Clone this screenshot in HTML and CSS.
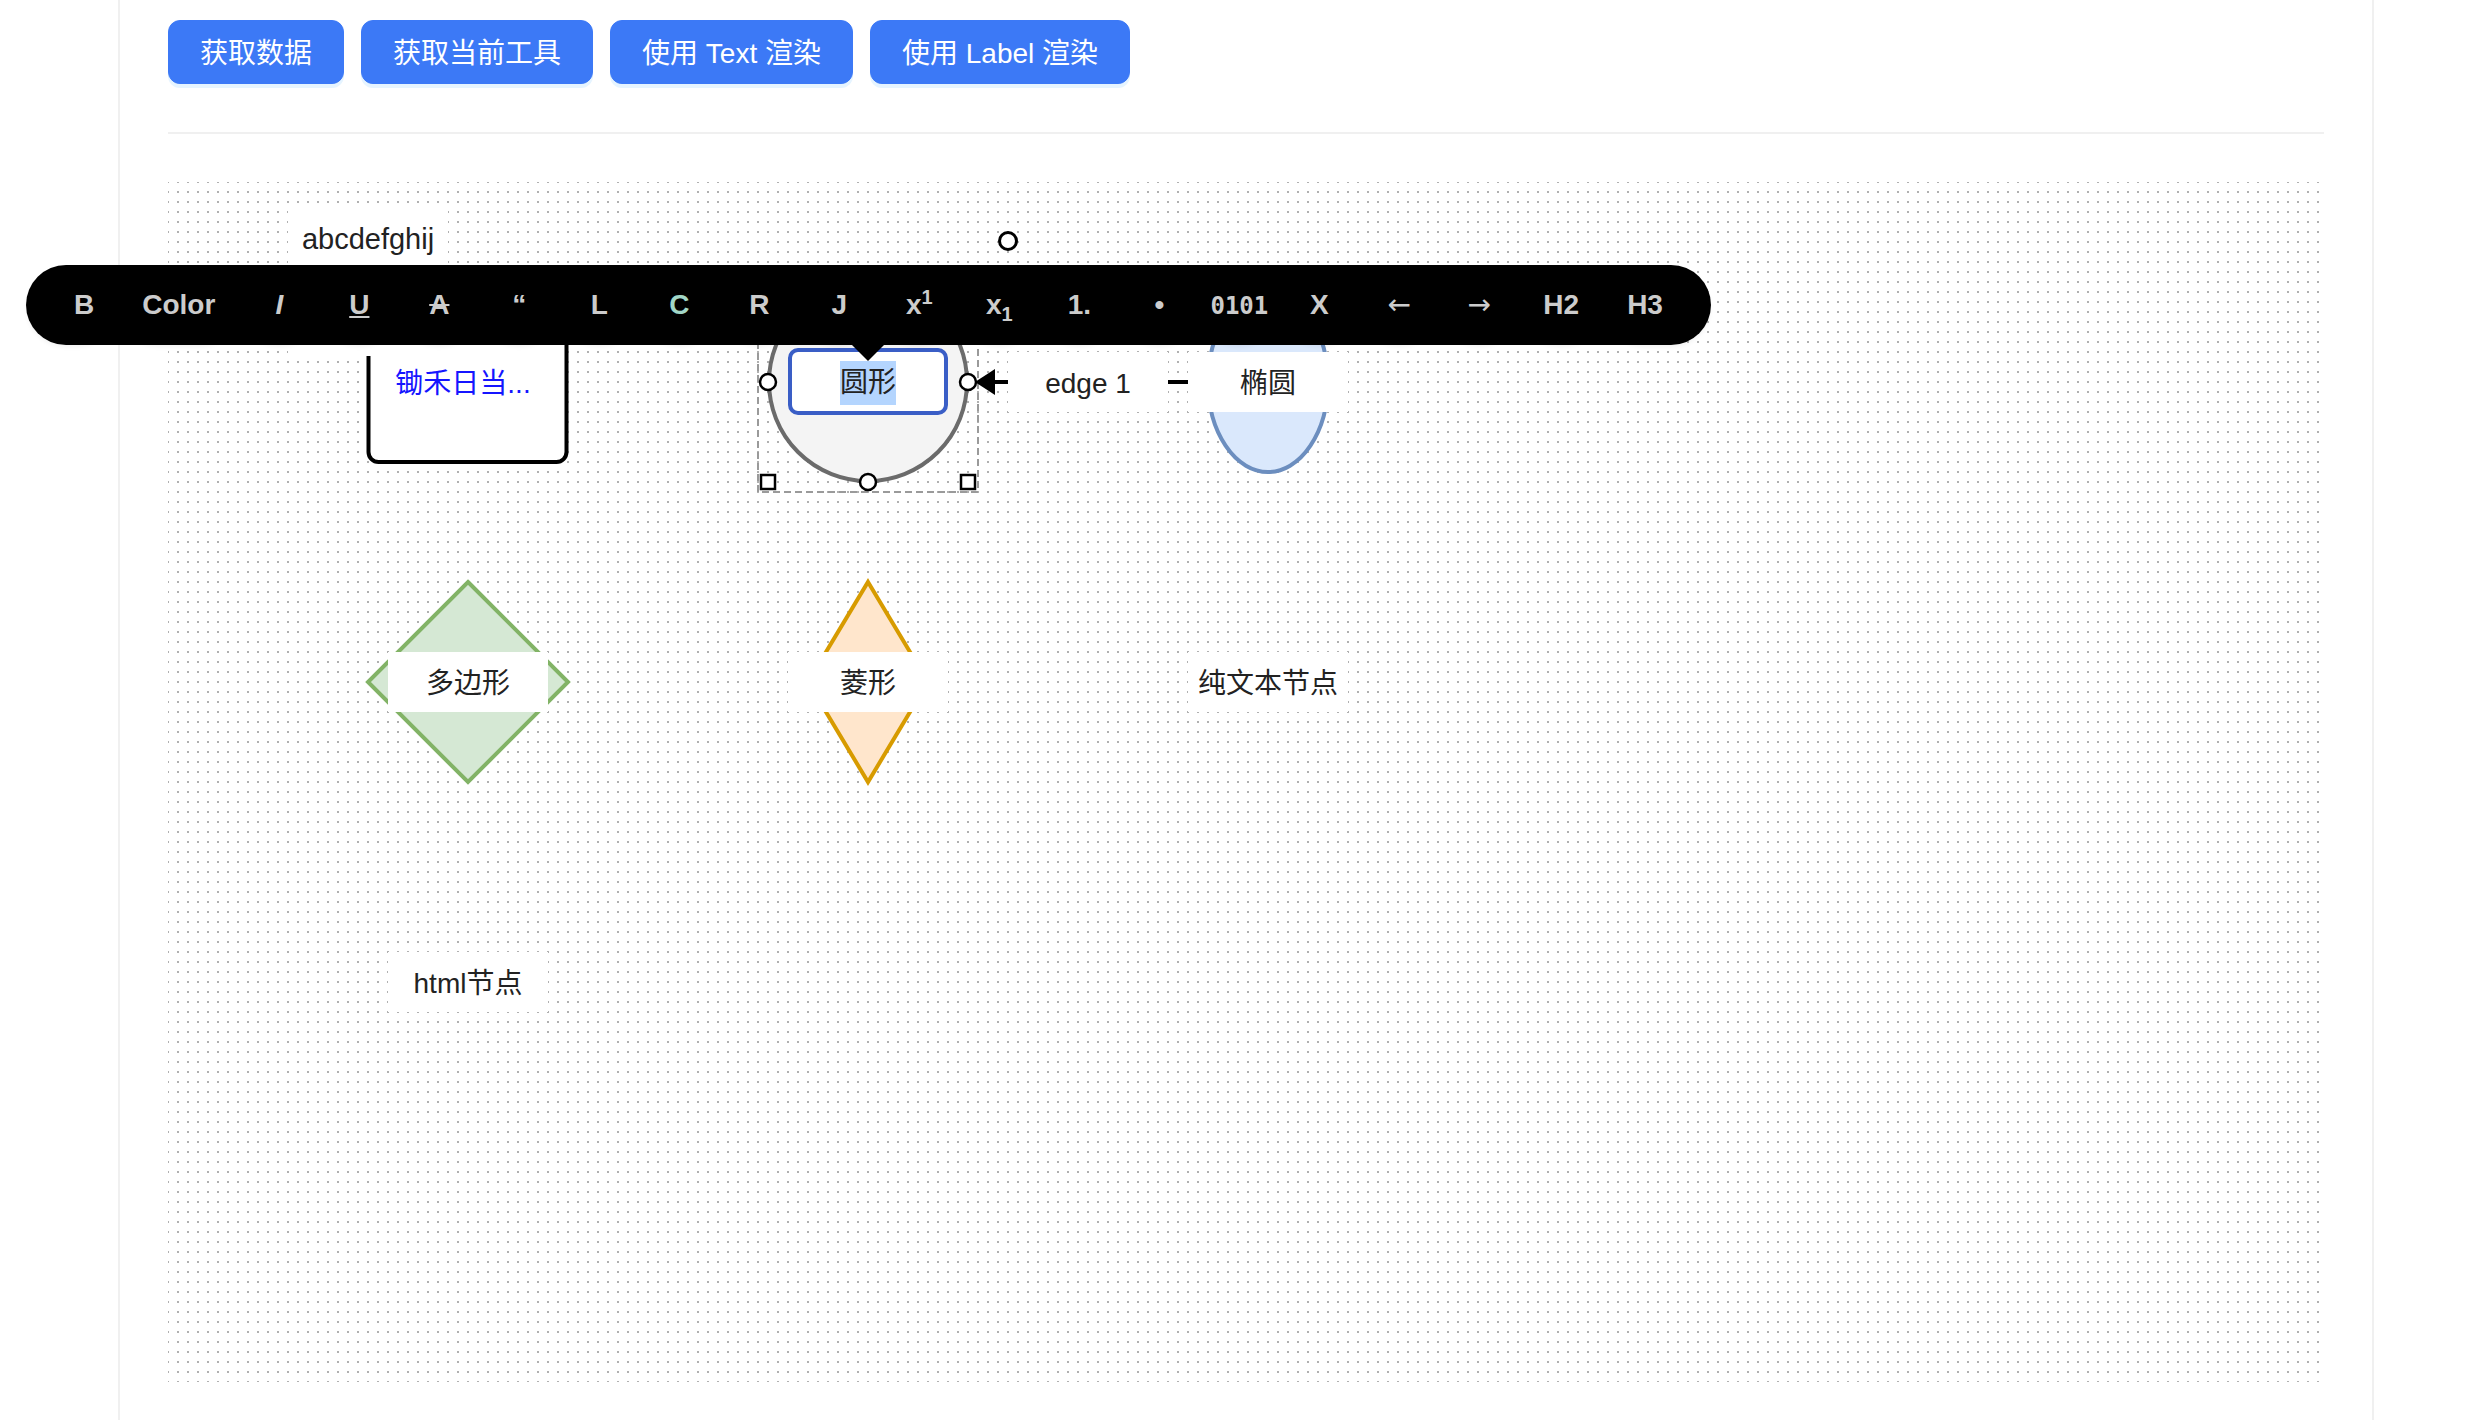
FILE: index.html
```html
<!DOCTYPE html>
<html lang="zh">
<head>
<meta charset="utf-8">
<title>LogicFlow</title>
<link rel="stylesheet" href="styles.css">
</head>
<body>
<div class="page">
  <div class="actions">
    <button class="btn">获取数据</button>
    <button class="btn">获取当前工具</button>
    <button class="btn">使用 Text 渲染</button>
    <button class="btn">使用 Label 渲染</button>
  </div>
  <div class="divider"></div>
  <div class="canvas">
    <svg class="shapes" width="2156" height="1200" viewBox="0 0 2156 1200">
      <!-- rect node -->
      <rect x="200.5" y="122" width="198" height="158" rx="10" ry="10" fill="#fff" stroke="#000" stroke-width="4"/>
      <!-- circle node -->
      <circle cx="700" cy="200" r="99" fill="#f4f4f4" stroke="#6b6b6b" stroke-width="4"/>
      <rect x="590" y="90" width="220" height="220" fill="none" stroke="#9a9a9a" stroke-width="2" stroke-dasharray="7 4"/>
      <!-- edge -->
      <line x1="826" y1="200" x2="1040" y2="200" stroke="#000" stroke-width="4"/>
      <polygon points="807,200 827,187 827,213" fill="#000"/>
      <!-- ellipse node -->
      <ellipse cx="1100" cy="200" rx="60" ry="90" fill="#dae8fc" stroke="#6c8ebf" stroke-width="4"/>
      <!-- polygon node -->
      <polygon points="300,400 400,500 300,600 200,500" fill="#d5e8d4" stroke="#82b366" stroke-width="4"/>
      <!-- diamond node -->
      <polygon points="700,400 760,500 700,600 640,500" fill="#ffe6cc" stroke="#d79b00" stroke-width="4"/>
      <!-- anchors -->
      <g fill="#fff" stroke="#000" stroke-width="2.5">
        <circle cx="600" cy="200" r="8"/>
        <circle cx="800" cy="200" r="8"/>
        <circle cx="700" cy="300" r="8"/>
        <circle cx="700" cy="100" r="8"/>
        <circle cx="840" cy="59" r="8.5" stroke-width="3"/>
      </g>
      <!-- resize handles -->
      <g fill="#fff" stroke="#000" stroke-width="2.5">
        <rect x="593" y="293" width="14" height="14"/>
        <rect x="793" y="293" width="14" height="14"/>
        <rect x="593" y="93" width="14" height="14"/>
        <rect x="793" y="93" width="14" height="14"/>
      </g>
    </svg>

    <div class="label l-abc">abcdefghij</div>
    <div class="label l-rect">锄禾日当...</div>
    <div class="label l-circle"><span class="sel">圆形</span></div>
    <div class="label l-edge">edge 1</div>
    <div class="label l-ellipse">椭圆</div>
    <div class="label l-poly">多边形</div>
    <div class="label l-diamond">菱形</div>
    <div class="label l-plain">纯文本节点</div>
    <div class="label l-html">html节点</div>

    <div class="me-toolbar">
      <ul class="me-list">
        <li><button class="me-btn first"><b>B</b></button></li>
        <li><button class="me-btn"><b>Color</b></button></li>
        <li><button class="me-btn"><b><i>I</i></b></button></li>
        <li><button class="me-btn"><b><u>U</u></b></button></li>
        <li><button class="me-btn"><b><s>A</s></b></button></li>
        <li><button class="me-btn"><b>&ldquo;</b></button></li>
        <li><button class="me-btn"><b>L</b></button></li>
        <li><button class="me-btn active"><b>C</b></button></li>
        <li><button class="me-btn"><b>R</b></button></li>
        <li><button class="me-btn"><b>J</b></button></li>
        <li><button class="me-btn"><b>x<sup>1</sup></b></button></li>
        <li><button class="me-btn"><b>x<sub>1</sub></b></button></li>
        <li><button class="me-btn"><b>1.</b></button></li>
        <li><button class="me-btn"><b>&bull;</b></button></li>
        <li><button class="me-btn pre"><b>0101</b></button></li>
        <li><button class="me-btn"><b>X</b></button></li>
        <li><button class="me-btn arrow"><b>&larr;</b></button></li>
        <li><button class="me-btn arrow"><b>&rarr;</b></button></li>
        <li><button class="me-btn"><b>H2</b></button></li>
        <li><button class="me-btn last"><b>H3</b></button></li>
      </ul>
    </div>
  </div>
</div>
</body>
</html>
```
FILE: styles.css
```css
html, body {
  margin: 0;
  padding: 0;
  background: #fff;
}

body {
  font-family: "Liberation Sans", "Noto Sans CJK SC", sans-serif;
}

.page {
  margin-left: 118px;
  width: 2256px;
  box-sizing: border-box;
  min-height: 1420px;
  border-left: 2px solid #f0f0f0;
  border-right: 2px solid #f0f0f0;
  padding: 20px 48px 0 48px;
}

.actions {
  display: flex;
  gap: 17px;
}

.btn {
  height: 64px;
  padding: 3px 31px 0 31px;
  border: 1px solid #3c79f6;
  border-radius: 12px;
  background: #3c79f6;
  color: #fff;
  font-family: "Liberation Sans", "Noto Sans CJK SC", sans-serif;
  font-size: 28px;
  line-height: 1;
  box-shadow: 0 4px 0 rgba(5, 145, 255, 0.1);
  cursor: pointer;
}

.divider {
  margin-top: 48px;
  height: 2px;
  background: #f0f0f0;
}

.canvas {
  position: relative;
  margin-top: 48px;
  height: 1200px;
  background-image:
    linear-gradient(90deg, transparent 2px, #fff 2px),
    linear-gradient(#b0b0b0 2px, #fff 2px);
  background-size: 10px 10px;
  background-position: -1px -1px;
}

.shapes {
  position: absolute;
  left: 0;
  top: 0;
  overflow: visible;
}

.label {
  position: absolute;
  box-sizing: border-box;
  width: 160px;
  height: 60px;
  padding-top: 4px;
  display: flex;
  align-items: center;
  justify-content: center;
  background: #fff;
  color: #222;
  font-family: "Liberation Sans", "Noto Sans CJK SC", sans-serif;
  font-size: 28px;
  line-height: 40px;
  white-space: nowrap;
}

.l-abc {
  left: 120px;
  top: 23px;
  height: 151px;
  align-items: flex-start;
  padding-top: 14px;
  font-size: 29px;
}

.l-rect {
  left: 215px;
  top: 170px;
  background: transparent;
  color: #1515ff;
}

.l-circle {
  left: 620px;
  top: 166px;
  height: 67px;
  padding-top: 3px;
  border: 4px solid #3a5ec6;
  border-radius: 10px;
}

.sel {
  background: #b4d5fe;
  line-height: 44px;
  display: inline-block;
}

.l-edge { left: 840px; top: 170px; }
.l-ellipse { left: 1020px; top: 170px; }
.l-poly { left: 220px; top: 470px; }
.l-diamond { left: 620px; top: 470px; }
.l-plain { left: 1020px; top: 470px; }
.l-html { left: 220px; top: 770px; }

/* medium-editor (beagle) toolbar */
.me-toolbar {
  position: absolute;
  left: -142px;
  top: 83px;
  background: #000;
  border-radius: 100px;
  z-index: 10;
}

.me-toolbar::after {
  content: "";
  position: absolute;
  left: 50%;
  top: 80px;
  margin-left: -16px;
  border-style: solid;
  border-width: 16px 16px 0 16px;
  border-color: #000 transparent transparent transparent;
}

.me-list {
  display: flex;
  margin: 0;
  padding: 0;
  list-style: none;
}

.me-list li {
  margin: 0;
  padding: 0;
}

.me-btn {
  display: flex;
  align-items: center;
  justify-content: center;
  box-sizing: border-box;
  height: 80px;
  min-width: 80px;
  padding: 10px 24px;
  margin: 0;
  border: 0;
  background: transparent;
  color: #ccc;
  font-family: "Liberation Sans", Arial, sans-serif;
  font-size: 28px;
  line-height: 1.33;
  border-radius: 40px;
  box-shadow: 0 3px 5px -1px rgba(0, 0, 0, 0.06);
}

.me-btn.first {
  padding-left: 48px;
}

.me-btn.last {
  padding-right: 48px;
}

.me-btn.active {
  color: #a2d7c7;
}

.me-btn.pre {
  padding: 14px 0 10px 0;
  font-family: "DejaVu Sans Mono", "Liberation Mono", monospace;
  font-size: 24px;
}

.me-btn.arrow b {
  font-family: "DejaVu Sans", sans-serif;
  font-weight: normal;
  font-size: 28px;
}

.me-btn sup,
.me-btn sub {
  font-size: 20px;
  line-height: 0;
}
```
